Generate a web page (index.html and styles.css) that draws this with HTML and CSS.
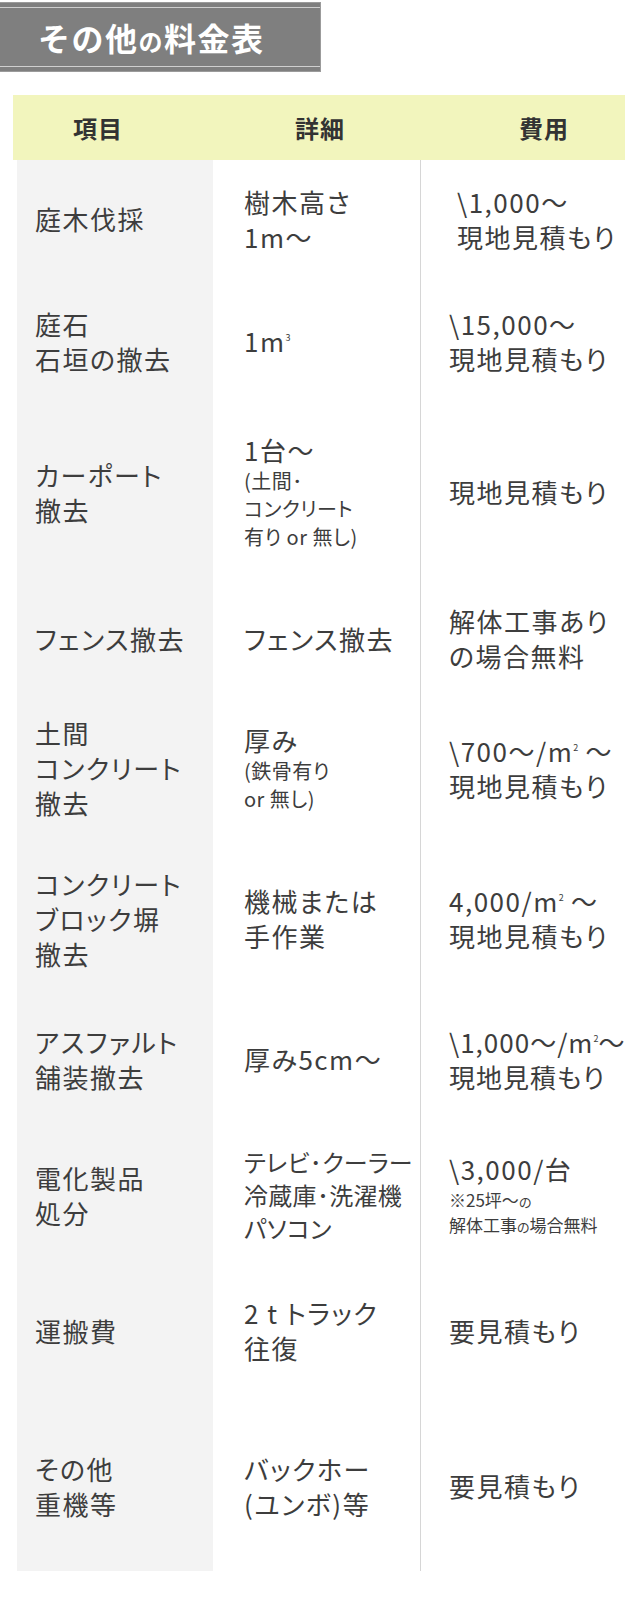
FILE: index.html
```html
<!DOCTYPE html>
<html lang="ja">
<head>
<meta charset="utf-8">
<title>その他の料金表</title>
<link rel="stylesheet" href="styles.css">
</head>
<body>
<div class="page">
  <div class="title"><div class="title-inner">その他<span class="title-no">の</span>料金表</div></div>

  <div class="table">
    <div class="thead">
      <span>項目</span><span>詳細</span><span>費用</span>
    </div>
    <div class="tbody">
      <div class="row r1">
        <div class="c1"><div class="t">庭木伐採</div></div>
        <div class="c2"><div class="t">樹木高さ<br>1m～</div></div>
        <div class="c3 indent"><div class="t">\1,000～<br>現地見積もり</div></div>
      </div>
      <div class="row r2">
        <div class="c1"><div class="t">庭石<br>石垣の撤去</div></div>
        <div class="c2"><div class="t">1m<span class="sup">3</span></div></div>
        <div class="c3"><div class="t">\15,000～<br>現地見積もり</div></div>
      </div>
      <div class="row r3">
        <div class="c1"><div class="t">カーポート<br>撤去</div></div>
        <div class="c2"><div class="t">1台～<div class="sm">(土間･<br>コンクリート<br>有り or 無し)</div></div></div>
        <div class="c3"><div class="t">現地見積もり</div></div>
      </div>
      <div class="row r4">
        <div class="c1"><div class="t">フェンス撤去</div></div>
        <div class="c2"><div class="t">フェンス撤去</div></div>
        <div class="c3"><div class="t">解体工事あり<br>の場合無料</div></div>
      </div>
      <div class="row r5">
        <div class="c1"><div class="t">土間<br>コンクリート<br>撤去</div></div>
        <div class="c2"><div class="t">厚み<div class="sm">(鉄骨有り<br>or 無し)</div></div></div>
        <div class="c3"><div class="t">\700～/m<span class="sup">2</span> ～<br>現地見積もり</div></div>
      </div>
      <div class="row r6">
        <div class="c1"><div class="t">コンクリート<br>ブロック塀<br>撤去</div></div>
        <div class="c2"><div class="t">機械または<br>手作業</div></div>
        <div class="c3"><div class="t">4,000/m<span class="sup">2</span> ～<br>現地見積もり</div></div>
      </div>
      <div class="row r7">
        <div class="c1"><div class="t">アスファルト<br>舗装撤去</div></div>
        <div class="c2"><div class="t">厚み5cm～</div></div>
        <div class="c3"><div class="t narrow">\1,000～/m<span class="sup">2</span>～<br>現地見積もり</div></div>
      </div>
      <div class="row r8">
        <div class="c1"><div class="t">電化製品<br>処分</div></div>
        <div class="c2"><div class="t tight">テレビ･クーラー<br>冷蔵庫･洗濯機<br>パソコン</div></div>
        <div class="c3"><div class="t">\3,000/台<div class="xs">※25坪～<span class="xs-no">の</span><br>解体工事<span class="xs-no">の</span>場合無料</div></div></div>
      </div>
      <div class="row r9">
        <div class="c1"><div class="t">運搬費</div></div>
        <div class="c2"><div class="t">2 t トラック<br>往復</div></div>
        <div class="c3"><div class="t">要見積もり</div></div>
      </div>
      <div class="row r10">
        <div class="c1"><div class="t">その他<br>重機等</div></div>
        <div class="c2"><div class="t">バックホー<br>(ユンボ)等</div></div>
        <div class="c3"><div class="t">要見積もり</div></div>
      </div>
    </div>
  </div>
</div>
</body>
</html>
```

FILE: styles.css
```css
html, body {
  margin: 0;
  padding: 0;
  background: #ffffff;
}

body {
  font-family: "Noto Sans CJK JP", "Noto Sans", sans-serif;
  color: #3d3d3d;
}

.page {
  width: 640px;
  padding-top: 2px;
}

/* Title plate */
.title {
  width: 320px;
  background: #7f7f7f;
  border: 1px solid #9b9b9b;
  border-left: none;
  padding: 4px 0;
}

.title-inner {
  height: 58px;
  border-top: 1px solid #cfcfcf;
  border-bottom: 1px solid #cfcfcf;
  color: #ffffff;
  font-size: 32px;
  font-weight: 700;
  line-height: 58px;
  padding-left: 38px;
  letter-spacing: 1.5px;
  white-space: nowrap;
}

.title-no {
  font-size: 24px;
}

/* Table */
.table {
  margin-top: 23px;
  margin-left: 13px;
  width: 612px;
}

.thead {
  height: 65px;
  background: #f2f5bd;
  display: grid;
  grid-template-columns: 222px 224px 1fr;
  align-items: center;
  padding-left: 60px;
  font-size: 24px;
  font-weight: 700;
  color: #333333;
  letter-spacing: 1px;
}

.tbody {
  margin-left: 4px;
  width: 608px;
}

.row {
  display: grid;
  grid-template-columns: 196px 207px 1fr;
}

.r1 { height: 127px; }
.r2 { height: 107px; }
.r3 { height: 195px; }
.r4 { height: 98px; }
.r5 { height: 161px; }
.r6 { height: 140px; }
.r7 { height: 141px; }
.r8 { height: 131px; }
.r9 { height: 140px; }
.r10 { height: 171px; }

.c1, .c2, .c3 {
  display: flex;
  align-items: center;
}

.r1 > div {
  padding-bottom: 10px;
}

.t {
  font-size: 26px;
  line-height: 35px;
  letter-spacing: 1.5px;
  white-space: nowrap;
  font-feature-settings: "palt";
}

.c1 {
  background: #f3f3f3;
  padding-left: 18px;
}

.c2 {
  padding-left: 31px;
}

.c3 {
  border-left: 1px solid #d6d6d6;
  padding-left: 28px;
}

.c3.indent {
  padding-left: 36px;
}

.t.tight {
  font-size: 24px;
  letter-spacing: 0.3px;
  line-height: 33px;
}

.t.narrow {
  letter-spacing: 1px;
}

.sm {
  font-size: 20px;
  line-height: 28px;
  letter-spacing: 0.5px;
}

.xs {
  font-size: 17px;
  line-height: 23px;
  letter-spacing: 0;
  margin-top: 2px;
}

.xs-no {
  font-size: 13px;
}

.sup {
  font-size: 9px;
  line-height: 0;
  vertical-align: 11px;
  letter-spacing: 0;
}
```
